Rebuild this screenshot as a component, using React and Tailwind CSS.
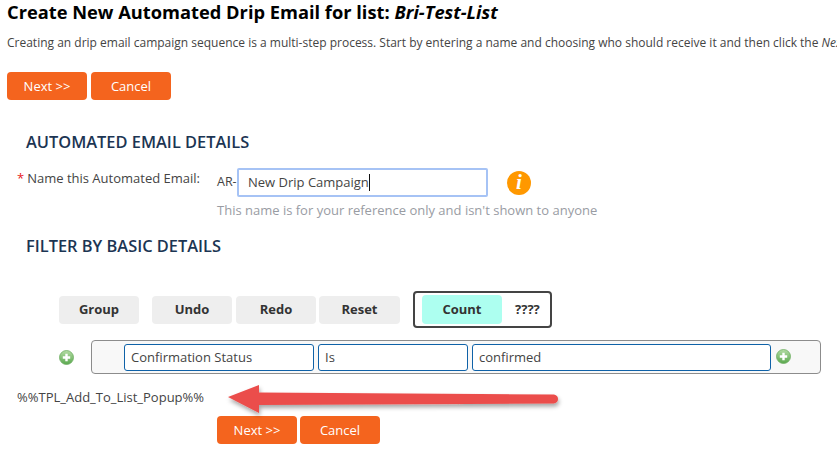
const font = { fontFamily: '"Open Sans", sans-serif' };

function OrangeButton({ children }) {
  return (
    <button className="w-20 h-7 rounded-[4px] bg-[#f4641e] text-white text-[13px] leading-none">
      {children}
    </button>
  );
}

function GrayButton({ children, className = "" }) {
  return (
    <button className={`h-7 rounded-[4px] bg-[#eeeeee] text-[#333333] text-[13px] font-bold leading-none ${className}`}>
      {children}
    </button>
  );
}

function Plus() {
  return (
    <svg width="15" height="15" viewBox="0 0 15 15" className="shrink-0">
      <defs>
        <linearGradient id="g" x1="0" y1="0" x2="0" y2="1">
          <stop offset="0" stopColor="#b4dca4" />
          <stop offset="1" stopColor="#5aa84e" />
        </linearGradient>
      </defs>
      <circle cx="7.5" cy="7.5" r="7" fill="url(#g)" stroke="#6fae63" strokeWidth="0.8" />
      <path d="M7.5 3.8v7.4M3.8 7.5h7.4" stroke="#ffffff" strokeWidth="2.4" />
    </svg>
  );
}

function Field({ children, className = "" }) {
  return (
    <div className={`h-[27px] rounded-[3px] border border-[#0f62a8] bg-white flex items-center px-[6px] pt-[1px] text-[13px] text-[#444444] ${className}`}>
      {children}
    </div>
  );
}

export default function App() {
  return (
    <div style={font} className="relative w-[837px] h-[476px] overflow-hidden bg-white">
      <div className="pl-[7px] pt-[1px]">
        <h1 className="text-[18.27px] leading-[22px] font-bold text-black whitespace-nowrap">
          Create New Automated Drip Email for list: <em>Bri-Test-List</em>
        </h1>
        <p className="mt-[10px] text-[12px] leading-[20px] text-[#444444] whitespace-nowrap">
          Creating an drip email campaign sequence is a multi-step process. Start by entering a name and choosing who should receive it and then click the <em>Next</em>
        </p>
        <div className="mt-[19px] flex gap-1">
          <OrangeButton>Next &gt;&gt;</OrangeButton>
          <OrangeButton>Cancel</OrangeButton>
        </div>
      </div>

      <h2 className="mt-[31px] ml-[26px] text-[16.4px] leading-[22px] font-semibold text-[#1c3553]">
        AUTOMATED EMAIL DETAILS
      </h2>

      <div className="mt-[15px] ml-[17px] flex items-start">
        <div className="w-[200px] pt-[1px] text-[13px] leading-[18px] text-[#444444] whitespace-nowrap">
          <span className="text-[#e8201c] mr-[3px]">*</span>Name this Automated Email:
        </div>
        <div>
          <div className="flex items-center">
            <span className="text-[12.5px] text-[#444444] w-[20px]">AR-</span>
            <div className="w-[251px] h-[29px] rounded-[2px] border-2 border-[#a6c3f5] bg-white flex items-center pl-[9px] text-[13px] text-[#444444]">
              New Drip Campaign<span className="w-px h-[17px] bg-[#111111]" />
            </div>
            <div className="ml-[19px] w-6 h-6 rounded-full bg-[#ff9800] flex items-center justify-center text-white font-bold italic text-[21px] leading-none" style={{ fontFamily: '"Liberation Serif", serif' }}>
              i
            </div>
          </div>
          <p className="mt-[4px] text-[13px] leading-[18px] text-[#999ca3] whitespace-nowrap">
            This name is for your reference only and isn't shown to anyone
          </p>
        </div>
      </div>

      <h2 className="mt-[16px] ml-[26px] text-[16.4px] leading-[22px] font-semibold text-[#1c3553]">
        FILTER BY BASIC DETAILS
      </h2>

      <div className="mt-[34px] ml-[59px] flex items-center">
        <GrayButton className="w-20">Group</GrayButton>
        <GrayButton className="w-20 ml-[13px]">Undo</GrayButton>
        <GrayButton className="w-20 ml-1">Redo</GrayButton>
        <GrayButton className="w-[81px] ml-[3px]">Reset</GrayButton>
        <div className="ml-[13px] w-[139px] h-[37px] rounded-[4px] border-2 border-[#444444] flex items-center pl-[7px]">
          <div className="w-[80px] h-[29px] rounded-[4px] bg-[#adfff0] flex items-center justify-center text-[13px] font-bold text-[#333333]">
            Count
          </div>
          <span className="ml-[13px] text-[13px] font-bold text-[#333333]">????</span>
        </div>
      </div>

      <div className="mt-[12px] ml-[59px] flex items-center">
        <Plus />
        <div className="ml-[17px] w-[730px] h-[34px] rounded-[4px] border border-[#8c8c8c] bg-[#f8f8f8] flex items-center pl-[32px]">
          <Field className="w-[190px]">Confirmation Status</Field>
          <Field className="w-[150px] ml-1">Is</Field>
          <Field className="w-[299px] ml-1">confirmed</Field>
          <div className="ml-[5px] -mt-[2px]"><Plus /></div>
        </div>
      </div>

      <p className="mt-[14px] ml-[17px] text-[13px] leading-[18px] text-[#444444]">%%TPL_Add_To_List_Popup%%</p>

      <div className="mt-[10px] ml-[217px] flex gap-[3px]">
        <OrangeButton>Next &gt;&gt;</OrangeButton>
        <OrangeButton>Cancel</OrangeButton>
      </div>

      <svg className="absolute left-[222px] top-[378px]" width="345" height="46" viewBox="0 0 345 46">
        <defs>
          <filter id="s" x="-5%" y="-30%" width="110%" height="170%">
            <feDropShadow dx="1" dy="3" stdDeviation="2" floodColor="#000000" floodOpacity="0.35" />
          </filter>
        </defs>
        <path d="M6 19L37 7V14.5L332 16.5C335 17 336 19 336 21C336 23 335 25 332 25.5L37 27V35Z" fill="#eb4d4b" filter="url(#s)" />
      </svg>
    </div>
  );
}
